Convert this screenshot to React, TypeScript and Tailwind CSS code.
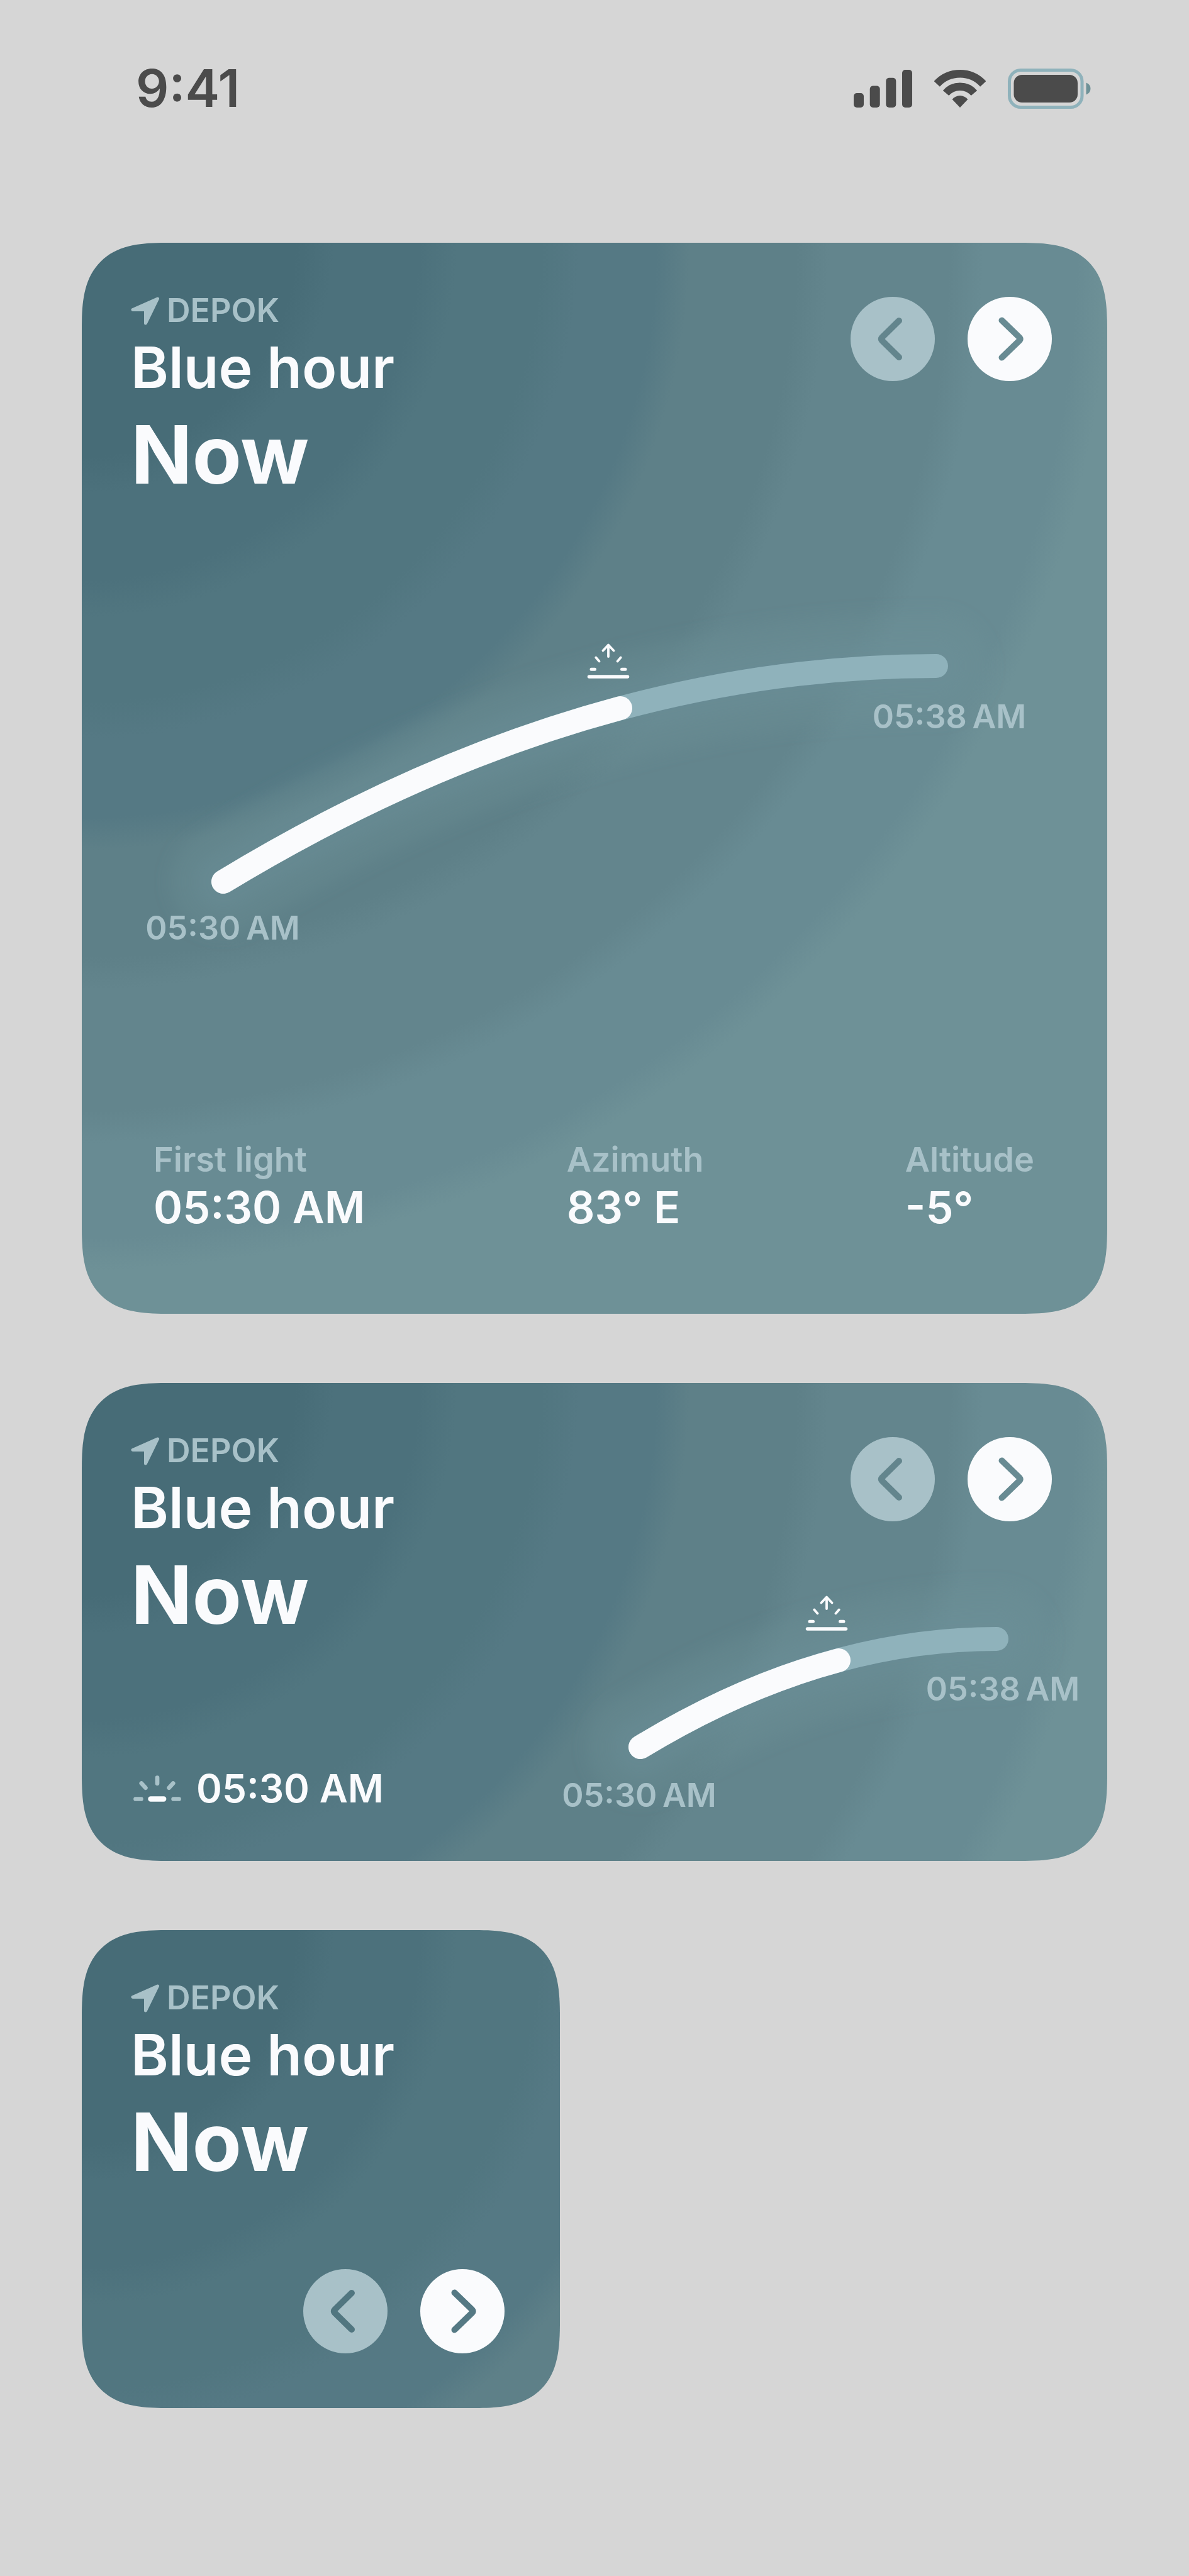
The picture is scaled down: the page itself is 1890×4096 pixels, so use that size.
import type { ReactNode } from "react";

const cardBase =
  "relative overflow-hidden rounded-[138px] [corner-shape:superellipse(1.5)] bg-[radial-gradient(circle_at_0_0,#476c77_340px,#4c717c_400px,#4c717c_536px,#517680_596px,#517680_730px,#557984_790px,#557984_914px,#5e8088_966px,#5e8088_1136px,#63858d_1188px,#63858d_1380px,#688b93_1432px,#688b93_1582px,#6e9197_1634px)]";

function SignalIcon() {
  return (
    <svg viewBox="0 0 93 60" className="w-[93px] h-[60px]" fill="#4b4b4b" aria-label="Signal">
      <rect x="0" y="37" width="16" height="23" rx="5" />
      <rect x="25.7" y="25.5" width="16" height="34.5" rx="5" />
      <rect x="51.3" y="12.7" width="16" height="47.3" rx="5" />
      <rect x="77" y="0" width="16" height="60" rx="5" />
    </svg>
  );
}

function WifiIcon() {
  return (
    <svg viewBox="0 0 82 60" className="w-[82px] h-[60px]" fill="none" stroke="#4b4b4b" strokeWidth="12.5" aria-label="Wi-Fi">
      <path d="M4.3 22.4A50 50 0 0 1 77.7 22.4" />
      <path d="M18.6 37A29.5 29.5 0 0 1 63.4 37" />
      <path d="M28.6 47A16 16 0 0 1 53.4 47L41 60Z" fill="#4b4b4b" stroke="none" />
    </svg>
  );
}

function BatteryIcon() {
  return (
    <svg viewBox="0 0 132 64" className="w-[132px] h-[64px]" fill="none" aria-label="Battery">
      <rect x="2.5" y="2.5" width="115.5" height="59" rx="18" stroke="#8fb2bb" strokeWidth="5" />
      <rect x="9.5" y="10" width="101.5" height="44" rx="13" fill="#4b4b4b" />
      <path d="M124.5 22.5Q131.5 25 131.5 32Q131.5 38.5 124.5 41.5Z" fill="#6e9197" />
    </svg>
  );
}

function LocationIcon() {
  return (
    <svg viewBox="0 0 46 45" className="w-[46px] h-[45px]" aria-hidden="true">
      <path
        d="M42.5 3L3 20.5H23.5V42Z"
        fill="#a8c1c8"
        stroke="#a8c1c8"
        strokeWidth="5"
        strokeLinejoin="round"
      />
    </svg>
  );
}

function FirstLightIcon() {
  return (
    <svg viewBox="0 0 76 42" className="w-[76px] h-[42px]" fill="none" stroke="#a8c1c8" strokeWidth="6.7" strokeLinecap="round" aria-hidden="true">
      <path d="M38 3.5V12.8M12.8 12.5L19.4 19.7M63.2 12.5L56.6 19.7M3.5 37.5H12.4M63.6 37.5H72.5" />
      <path d="M27.5 37.5H48.2" stroke="#fafbfd" strokeWidth="8.4" />
    </svg>
  );
}

function Header() {
  return (
    <header className="pt-[78px] pl-[78px]">
      <p className="flex items-center gap-[11px] text-[52px] leading-[60px] font-semibold text-[#a8c1c8]">
        <LocationIcon />
        DEPOK
      </p>
      <h2 className="text-[91px] leading-[120px] font-semibold whitespace-nowrap">Blue hour</h2>
      <p className="text-[128px] leading-[158px] font-bold">Now</p>
    </header>
  );
}

function Pager({ prev, next }: { prev: string; next: string }) {
  return (
    <nav className="flex gap-[52px]">
      <button type="button" aria-label="Previous" className="size-[134px] rounded-full bg-[#a8c1c8]">
        <svg viewBox="0 0 134 134" fill="none" stroke={prev} strokeWidth="10" strokeLinecap="round" strokeLinejoin="round">
          <path d="M77 38L50 64.5Q47.5 67 50 69.5L77 96" />
        </svg>
      </button>
      <button type="button" aria-label="Next" className="size-[134px] rounded-full bg-[#fafbfd]">
        <svg viewBox="0 0 134 134" fill="none" stroke={next} strokeWidth="10" strokeLinecap="round" strokeLinejoin="round">
          <path d="M54.5 37.5L82.5 64.5Q85 67 82.5 69.5L54.5 96.5" />
        </svg>
      </button>
    </nav>
  );
}

type ArcProps = {
  id: string;
  viewBox: string;
  track: string;
  progress: string;
  sun: [number, number];
  start: [number, number];
  end: [number, number];
};

function SunArc({ id, viewBox, track, progress, sun, start, end }: ArcProps) {
  return (
    <svg viewBox={viewBox} className="block w-full overflow-visible" fill="none" strokeLinecap="round" strokeLinejoin="round">
      <defs>
        <filter id={id} x="-30%" y="-100%" width="160%" height="300%">
          <feGaussianBlur stdDeviation="12" />
        </filter>
      </defs>
      <g stroke="#6e9197" filter={`url(#${id})`}>
        <path d={track} strokeWidth="170" opacity="0.3" />
        <path d={track} strokeWidth="90" opacity="0.35" />
      </g>
      <path d={track} stroke="#8fb2bb" strokeWidth="38" />
      <path d={progress} stroke="#fafbfd" strokeWidth="38" />
      <g transform={`translate(${sun[0]} ${sun[1]})`} stroke="#fafbfd" strokeWidth="3.8">
        <path d="M0 -50V-32M-8.5 -41.5L0 -50.5L8.5 -41.5M-19.7 -30.5L-14.5 -24.6M19.7 -30.5L14.5 -24.6" />
        <path d="M-27 -11.8H-21.5M27 -11.8H21.5" strokeWidth="5" />
        <path d="M-30.5 0H30.5" strokeWidth="5.5" />
      </g>
      <g fill="#a8c1c8" textAnchor="middle" className="text-[52px] font-semibold">
        <text x={start[0]} y={start[1]}>{"05:30\u2009AM"}</text>
        <text x={end[0]} y={end[1]}>{"05:38\u2009AM"}</text>
      </g>
    </svg>
  );
}

function Stat({ label, children }: { label: string; children: ReactNode }) {
  return (
    <div>
      <dt className="text-[54px] leading-[60px] font-semibold text-[#a8c1c8]">{label}</dt>
      <dd className="text-[70px] leading-[92px] font-semibold">{children}</dd>
    </div>
  );
}

export default function App() {
  return (
    <div className="min-h-screen bg-[#d6d6d6] font-['Inter',sans-serif] text-[#fafbfd]">
      <div className="flex h-[282px] items-center justify-between pl-[216px] pr-[156px]">
        <time className="text-[82px] leading-[96px] font-semibold text-[#4b4b4b]">9:41</time>
        <div className="flex items-center gap-[35px]">
          <SignalIcon />
          <WifiIcon />
          <BatteryIcon />
        </div>
      </div>

      <main className="grid grid-cols-2 gap-[110px] px-[130px] pt-[104px]">
        <section className={`${cardBase} col-span-2`}>
          <div className="flex items-start justify-between">
            <Header />
            <div className="pt-[86px] pr-[88px]">
              <Pager prev="#63858d" next="#688b93" />
            </div>
          </div>
          <SunArc
            id="glow-large"
            viewBox="130 802 1630 1012"
            track="M355 1402Q921 1059 1488 1059"
            progress="M355 1402Q670 1211 986 1126"
            sun={[967, 1076]}
            start={[354, 1494]}
            end={[1509, 1158]}
          />
          <dl className="relative flex justify-between pr-[116px] pb-[123px] pl-[114px]">
            <Stat label="First light">05:30 AM</Stat>
            <Stat label="Azimuth">83° E</Stat>
            <Stat label="Altitude">-5°</Stat>
          </dl>
        </section>

        <section className={`${cardBase} col-span-2 grid grid-cols-[67fr_96fr]`}>
          <div className="relative z-10 flex flex-col justify-between">
            <Header />
            <p className="flex items-center gap-[24px] pb-[79px] pl-[82px] text-[62px] leading-[72px] font-semibold">
              <FirstLightIcon />
              05:30 AM
            </p>
          </div>
          <div>
            <div className="flex justify-end pt-[86px] pr-[88px]">
              <Pager prev="#63858d" next="#688b93" />
            </div>
            <SunArc
              id="glow-medium"
              viewBox="800 2419 960 540"
              track="M1018 2778Q1301 2606 1584 2606"
              progress="M1018 2778Q1176 2682 1333 2640"
              sun={[1314, 2590]}
              start={[1016, 2873]}
              end={[1594, 2704]}
            />
          </div>
        </section>

        <section className={`${cardBase} flex aspect-square flex-col justify-between`}>
          <Header />
          <div className="flex justify-end pr-[88px] pb-[87px]">
            <Pager prev="#517680" next="#557984" />
          </div>
        </section>
      </main>
    </div>
  );
}
